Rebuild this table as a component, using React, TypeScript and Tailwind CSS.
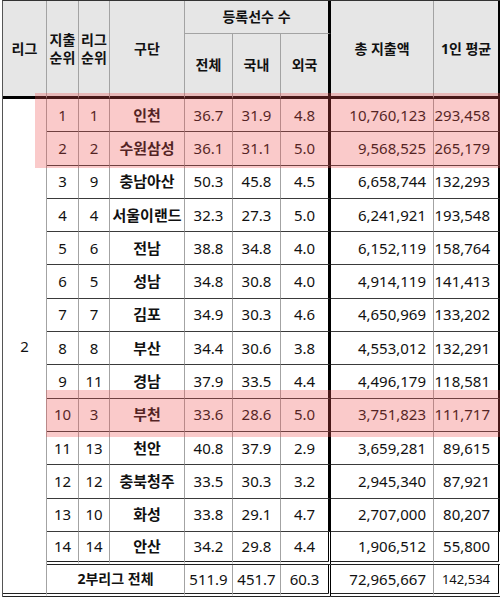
import React from "react"

type Row = {
  spend: number
  league: number
  team: string
  total: string
  dom: string
  foreign: string
  money: string
  avg: string
}

const rows: Row[] = [
  { spend: 1, league: 1, team: "인천", total: "36.7", dom: "31.9", foreign: "4.8", money: "10,760,123", avg: "293,458" },
  { spend: 2, league: 2, team: "수원삼성", total: "36.1", dom: "31.1", foreign: "5.0", money: "9,568,525", avg: "265,179" },
  { spend: 3, league: 9, team: "충남아산", total: "50.3", dom: "45.8", foreign: "4.5", money: "6,658,744", avg: "132,293" },
  { spend: 4, league: 4, team: "서울이랜드", total: "32.3", dom: "27.3", foreign: "5.0", money: "6,241,921", avg: "193,548" },
  { spend: 5, league: 6, team: "전남", total: "38.8", dom: "34.8", foreign: "4.0", money: "6,152,119", avg: "158,764" },
  { spend: 6, league: 5, team: "성남", total: "34.8", dom: "30.8", foreign: "4.0", money: "4,914,119", avg: "141,413" },
  { spend: 7, league: 7, team: "김포", total: "34.9", dom: "30.3", foreign: "4.6", money: "4,650,969", avg: "133,202" },
  { spend: 8, league: 8, team: "부산", total: "34.4", dom: "30.6", foreign: "3.8", money: "4,553,012", avg: "132,291" },
  { spend: 9, league: 11, team: "경남", total: "37.9", dom: "33.5", foreign: "4.4", money: "4,496,179", avg: "118,581" },
  { spend: 10, league: 3, team: "부천", total: "33.6", dom: "28.6", foreign: "5.0", money: "3,751,823", avg: "111,717" },
  { spend: 11, league: 13, team: "천안", total: "40.8", dom: "37.9", foreign: "2.9", money: "3,659,281", avg: "89,615" },
  { spend: 12, league: 12, team: "충북청주", total: "33.5", dom: "30.3", foreign: "3.2", money: "2,945,340", avg: "87,921" },
  { spend: 13, league: 10, team: "화성", total: "33.8", dom: "29.1", foreign: "4.7", money: "2,707,000", avg: "80,207" },
  { spend: 14, league: 14, team: "안산", total: "34.2", dom: "29.8", foreign: "4.4", money: "1,906,512", avg: "55,800" },
]

const font = { fontFamily: "'Noto Sans', 'Noto Sans CJK KR', sans-serif" }

export default function App() {
  const cell = "border-r border-r-[#a3a3a3] border-b border-b-[#3a3a3a] p-0 text-center"
  const thick = "border-r-[3px] border-r-black"

  return (
    <div className="w-[500px] h-[601px] bg-white overflow-hidden text-[#111]" style={font}>
      <div className="relative pl-[2px]">
        <table className="table-fixed border-separate border-spacing-0 border-t border-t-[#333] border-l border-l-[#555] w-[498px] leading-none">
          <colgroup>
            <col className="w-[44px]" />
            <col className="w-[32px]" />
            <col className="w-[31px]" />
            <col className="w-[75px]" />
            <col className="w-[48px]" />
            <col className="w-[48px]" />
            <col className="w-[50px]" />
            <col className="w-[103px]" />
            <col className="w-[67px]" />
          </colgroup>
          <thead className="bg-[#e6e6e6] text-[14px] font-bold">
            <tr className="h-[33px]">
              <th rowSpan={2} className="border-r border-r-[#a3a3a3] border-b-[3px] border-b-black p-0">리그</th>
              <th rowSpan={2} className="border-r border-r-[#a3a3a3] border-b-[3px] border-b-black p-0 leading-[18px]">
                지출
                <br />
                순위
              </th>
              <th rowSpan={2} className="border-r border-r-[#a3a3a3] border-b-[3px] border-b-black p-0 leading-[18px]">
                리그
                <br />
                순위
              </th>
              <th rowSpan={2} className="border-r border-r-[#a3a3a3] border-b-[3px] border-b-black p-0">구단</th>
              <th colSpan={3} className={`border-b border-b-[#a3a3a3] p-0 ${thick}`}>등록선수 수</th>
              <th rowSpan={2} className="border-r border-r-[#a3a3a3] border-b-[3px] border-b-black p-0">총 지출액</th>
              <th rowSpan={2} className={`border-b-[3px] border-b-black p-0 ${thick}`}>1인 평균</th>
            </tr>
            <tr className="h-[65px]">
              <th className="border-r border-r-[#a3a3a3] border-b-[3px] border-b-black p-0">전체</th>
              <th className="border-r border-r-[#a3a3a3] border-b-[3px] border-b-black p-0">국내</th>
              <th className={`border-b-[3px] border-b-black p-0 ${thick}`}>외국</th>
            </tr>
          </thead>
          <tbody className="text-[15px]">
            {rows.map((r, i) => {
              const last = i === rows.length - 1
              const bottom = last ? "border-b-4 border-double border-b-[#222]" : ""
              return (
                <tr key={r.spend} className="h-[33.3px]">
                  {i === 0 && (
                    <td rowSpan={15} className="border-r border-r-[#a3a3a3] border-b-4 border-double border-b-[#222] p-0 text-center">
                      2
                    </td>
                  )}
                  <td className={`${cell} ${bottom}`}>{r.spend}</td>
                  <td className={`${cell} ${bottom}`}>{r.league}</td>
                  <td className={`${cell} ${bottom} font-bold`}>{r.team}</td>
                  <td className={`${cell} ${bottom}`}>{r.total}</td>
                  <td className={`${cell} ${bottom}`}>{r.dom}</td>
                  <td className={`${cell} ${bottom} ${thick}`}>{r.foreign}</td>
                  <td className={`${cell} ${bottom} text-right pr-[7px]`}>{r.money}</td>
                  <td className={`${cell} ${bottom} ${thick} text-right pr-[8px]`}>{r.avg}</td>
                </tr>
              )
            })}
            <tr className="h-[32px]">
              <td colSpan={3} className="border-r border-r-[#a3a3a3] border-b-4 border-double border-b-[#222] p-0 text-center font-bold text-[14px]">
                2부리그 전체
              </td>
              <td className="border-r border-r-[#a3a3a3] border-b-4 border-double border-b-[#222] p-0 text-center">511.9</td>
              <td className="border-r border-r-[#a3a3a3] border-b-4 border-double border-b-[#222] p-0 text-center">451.7</td>
              <td className={`border-b-4 border-double border-b-[#222] p-0 text-center ${thick}`}>60.3</td>
              <td className="border-r border-r-[#a3a3a3] border-b-4 border-double border-b-[#222] p-0 text-right pr-[7px]">72,965,667</td>
              <td className={`border-b-4 border-double border-b-[#222] p-0 text-right pr-[8px] text-[13px] ${thick}`}>142,534</td>
            </tr>
          </tbody>
        </table>

        {/* highlight overlays */}
        <div className="pointer-events-none absolute left-[35px] top-[93px] w-[465px] h-[75px] bg-[rgba(240,80,80,0.3)]" />
        <div className="pointer-events-none absolute left-[46px] top-[390px] w-[454px] h-[47px] bg-[rgba(240,80,80,0.3)]" />
      </div>
    </div>
  )
}
